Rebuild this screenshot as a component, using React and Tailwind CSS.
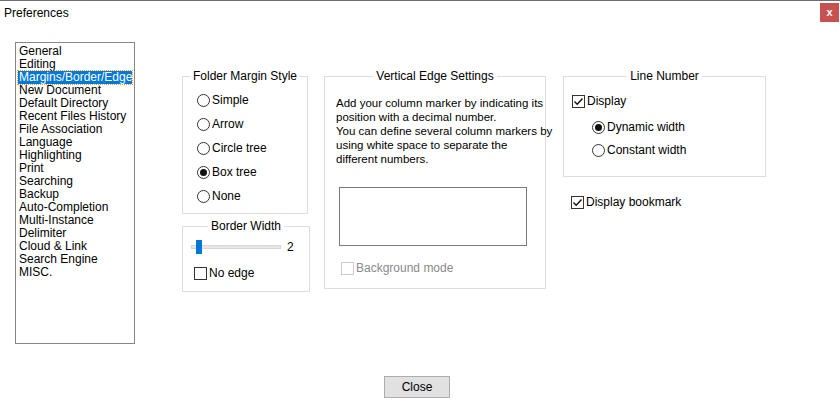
import React from "react";

const font = { fontFamily: '"Liberation Sans", Arial, sans-serif' };

function Group({ title, className, children }) {
  return (
    <div className={"relative border border-[#dcdcdc] " + className}>
      <div className="absolute left-0 right-0 -top-[8px] flex justify-center">
        <span className="bg-white px-[3px] text-[12px] leading-[14px] text-black">{title}</span>
      </div>
      {children}
    </div>
  );
}

function Radio({ checked, label }) {
  return (
    <div className="flex items-center h-[14px] text-[12px]">
      <span className="w-[13px] h-[13px] rounded-full border border-[#333] bg-white flex items-center justify-center mr-[2px]">
        {checked && <span className="w-[7px] h-[7px] rounded-full bg-[#111]" />}
      </span>
      {label}
    </div>
  );
}

function Check({ checked, label, disabled }) {
  return (
    <div className={"flex items-center h-[14px] text-[12px] " + (disabled ? "text-[#8a8a8a]" : "")}>
      <span className={"w-[13px] h-[13px] border flex items-center justify-center mr-[2px] " + (disabled ? "border-[#cccccc]" : "border-[#333]")}>
        {checked && (
          <svg width="11" height="11" viewBox="0 0 11 11"><path d="M1.5 5.5 L4.2 8.2 L9.5 2.5" stroke="#111" strokeWidth="1.4" fill="none" /></svg>
        )}
      </span>
      {label}
    </div>
  );
}

const items = ["General","Editing","Margins/Border/Edge","New Document","Default Directory","Recent Files History","File Association","Language","Highlighting","Print","Searching","Backup","Auto-Completion","Multi-Instance","Delimiter","Cloud & Link","Search Engine","MISC."];

export default function App() {
  return (
    <div style={font} className="w-[840px] h-[408px] bg-white border-t border-[#6e6e6e] relative text-black overflow-hidden">
      <div className="flex items-start h-[24px]">
        <div className="pl-[4px] pt-[5px] text-[12px] leading-[14px]">Preferences</div>
        <div className="ml-auto mt-[2px] mr-[1px] w-[19px] h-[19px] bg-[#c75050] text-white text-[11px] font-bold flex items-center justify-center">x</div>
      </div>
      <div className="flex items-start mt-[17px]">
        <div className="ml-[15px] w-[120px] h-[302px] border border-[#828790] pt-[2px] pl-[2px]">
          {items.map((t, i) => (
            <div key={t} className={"text-[12px] leading-[13px] h-[13px] " + (i === 2 ? "bg-[#0078d7] text-white w-[114px] outline-1 outline-dotted outline-[#f4a030] pl-[1px]" : "pl-[1px]")}>{t}</div>
          ))}
        </div>
        <div className="ml-[47px] mt-[34px] w-[126px] flex flex-col">
          <Group title="Folder Margin Style" className="h-[138px] pt-[16px] pl-[14px] flex flex-col gap-[10px]">
            <Radio label="Simple" />
            <Radio label="Arrow" />
            <Radio label="Circle tree" />
            <Radio checked label="Box tree" />
            <Radio label="None" />
          </Group>
          <Group title="Border Width" className="mt-[12px] w-[128px] h-[66px] pt-[12px] pl-[8px]">
            <div className="flex items-center h-[16px]">
              <div className="relative w-[90px] h-[16px]">
                <div className="absolute left-0 right-0 top-[6px] h-[4px] bg-[#e7e7e7] border border-[#d6d6d6]" />
                <div className="absolute left-[5px] top-[1px] w-[6px] h-[14px] bg-[#0078d7]" />
              </div>
              <span className="ml-[6px] text-[12px]">2</span>
            </div>
            <div className="mt-[11px] ml-[3px]"><Check label="No edge" /></div>
          </Group>
        </div>
        <Group title="Vertical Edge Settings" className="ml-[16px] mt-[34px] w-[222px] h-[213px] pt-[19px] pl-[11px]">
          <div className="text-[11.5px] leading-[14px] whitespace-nowrap">
            Add your column marker by indicating its<br />
            position with a decimal number.<br />
            You can define several column markers by<br />
            using white space to separate the<br />
            different numbers.
          </div>
          <div className="mt-[21px] ml-[3px] w-[188px] h-[59px] border border-[#7a7a7a]" />
          <div className="mt-[15px] ml-[5px]"><Check disabled label="Background mode" /></div>
        </Group>
        <div className="ml-[17px] mt-[34px] flex flex-col">
          <Group title="Line Number" className="w-[203px] h-[101px] pt-[17px] pl-[8px]">
            <Check checked label="Display" />
            <div className="ml-[20px] mt-[12px] flex flex-col gap-[9px]">
              <Radio checked label="Dynamic width" />
              <Radio label="Constant width" />
            </div>
          </Group>
          <div className="mt-[18px] ml-[8px]"><Check checked label="Display bookmark" /></div>
        </div>
      </div>
      <div className="absolute left-[384px] top-[375px] w-[66px] h-[22px] bg-[#e1e1e1] border border-[#adadad] text-[12px] flex items-center justify-center">Close</div>
    </div>
  );
}
